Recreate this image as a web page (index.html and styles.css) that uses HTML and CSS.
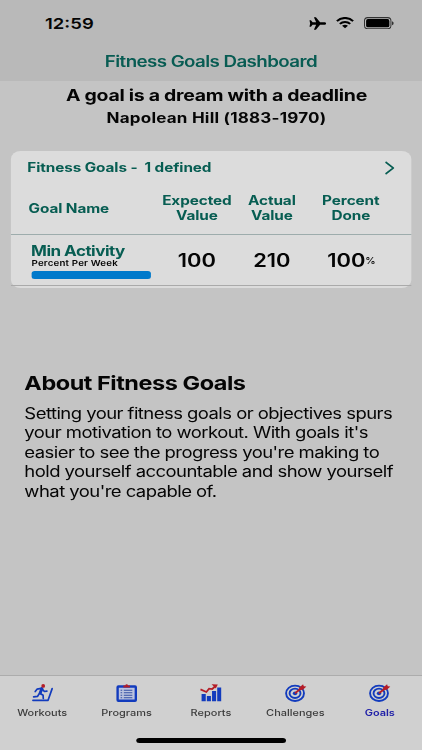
FILE: index.html
```html
<!DOCTYPE html>
<html lang="en">
<head>
<meta charset="utf-8">
<title>Fitness Goals Dashboard</title>
<link rel="stylesheet" href="styles.css">
</head>
<body>
<div class="screen">
  <header class="top">
    <div class="status">
      <span class="time">12:59</span>
      <div class="indicators">
        <svg class="plane" viewBox="0 0 17 13" preserveAspectRatio="none"><path d="M16.8 6.5c0 .8-1 1.3-2.2 1.3h-3.8L6.7 12.7H4.7L6.9 7.8H3.4L1.8 9.8H.3l.7-3.3-.7-3.3h1.5l1.6 2h3.5L4.7.3h2l4.1 4.9h3.8c1.2 0 2.2.5 2.2 1.3z"/></svg>
        <svg class="wifi" viewBox="0 0 18 12" preserveAspectRatio="none"><path d="M1 4.3C5.4-.1 12.6-.1 17 4.3M3.9 7.2c2.8-2.8 7.4-2.8 10.2 0" fill="none" stroke="#000" stroke-width="2.1"/><path d="M6.1 9.1c1.7-1.5 4.1-1.5 5.8 0L9 11.8z"/></svg>
        <svg class="battery" viewBox="0 0 30 12" preserveAspectRatio="none"><rect x=".6" y=".6" width="26.3" height="10.8" rx="3.2" fill="none" stroke="#333" stroke-width="1"/><rect x="2.2" y="2" width="23.1" height="8" rx="1.8"/><path d="M28.1 4v4c1.9-.7 1.9-3.3 0-4z" fill="#222"/></svg>
      </div>
    </div>
    <h1 class="title">Fitness Goals Dashboard</h1>
  </header>
  <main class="content">
    <div class="quote">A goal is a dream with a deadline</div>
    <div class="author">Napolean Hill (1883-1970)</div>
    <section class="card">
      <div class="card-head">
        <span class="card-title">Fitness Goals -&nbsp; 1 defined</span>
        <svg class="chevron" viewBox="0 0 10 14" preserveAspectRatio="none"><path d="M1 1l8 6-8 6" fill="none" stroke="#075d52" stroke-width="1.6"/></svg>
      </div>
      <div class="grid columns">
        <span class="name">Goal Name</span>
        <span>Expected<br>Value</span>
        <span>Actual<br>Value</span>
        <span>Percent<br>Done</span>
      </div>
      <div class="grid goal">
        <div class="activity">
          <div class="activity-name">Min Activity</div>
          <div class="unit">Percent Per Week</div>
          <div class="bar"></div>
        </div>
        <span>100</span>
        <span>210</span>
        <span class="percent">100<small>%</small></span>
      </div>
    </section>
    <section class="about">
      <h2>About Fitness Goals</h2>
      <p>Setting your fitness goals or objectives spurs<br>your motivation to workout. With goals it's<br>easier to see the progress you're making to<br>hold yourself accountable and show yourself<br>what you're capable of.</p>
    </section>
  </main>
  <nav class="tabs">
    <a class="tab"><svg viewBox="0 0 22 18" preserveAspectRatio="none"><g fill="none" stroke="#123bbd" stroke-linecap="round" stroke-linejoin="round"><path d="M1.3 16.3h15.2L20.6 4.6" stroke-width="1.7"/><path d="M10.3 4.6L8.6 9" stroke-width="3"/><path d="M9.7 4.4L5.4 5.2 3.6 7.5M10.6 5l2.2 2.5 2.5-.3M8.3 9.3l3.2 2 .2 3.2M7.8 9.4L6 12.3l-4 .6" stroke-width="1.7"/></g><circle cx="11.6" cy="1.9" r="1.9" fill="#b51d27"/></svg><span>Workouts</span></a>
    <a class="tab"><svg viewBox="0 0 22 18" preserveAspectRatio="none"><rect x="2" y="2.5" width="18.3" height="14.2" rx=".8" fill="#bbc3df" stroke="#123bbd" stroke-width="2.4"/><path d="M7.8 3.4V1.5H9.8a1.3 1.3 0 0 1 2.6 0h2v1.9z" fill="#b51d27"/><path d="M8.2 6.2h8.6M8.2 8.7h8.6M8.2 11.2h8.6M8.2 13.7h8.6M5 6.2h1.6M5 8.7h1.6M5 11.2h1.6M5 13.7h1.6" stroke="#3450a5" stroke-width="1.1"/></svg><span>Programs</span></a>
    <a class="tab"><svg viewBox="0 0 22 18" preserveAspectRatio="none"><path d="M2 10h4.2v7.3H2zM7.3 12h4.1v5.3H7.3zM12.5 7.1h4.1v10.2h-4.1zM17.7 3.5h4.2v13.8h-4.2z" fill="#123bbd"/><path d="M.9 5.4L6.8 8l2.7-3.3 3.2.3L16 2" fill="none" stroke="#b51d27" stroke-width="1.7"/><path d="M12 .2l6.3.2-2 4.2z" fill="#b51d27"/></svg><span>Reports</span></a>
    <a class="tab"><svg viewBox="0 0 22 18" preserveAspectRatio="none"><g fill="none" stroke="#123bbd" stroke-width="1.9"><ellipse cx="10.3" cy="9.3" rx="9" ry="7.7"/><ellipse cx="10.3" cy="9.3" rx="5.5" ry="4.7"/></g><ellipse cx="10.3" cy="9.3" rx="2.2" ry="1.9" fill="#123bbd"/><path d="M10.3 9.3l7.5-6" stroke="#b51d27" stroke-width="1.8"/><path d="M14.3 3.8L18.4.3l.7 1.9 2.6.4-3.5 3.1-3.4.2z" fill="#b51d27"/></svg><span>Challenges</span></a>
    <a class="tab active"><svg viewBox="0 0 22 18" preserveAspectRatio="none"><g fill="none" stroke="#123bbd" stroke-width="1.9"><ellipse cx="10.3" cy="9.3" rx="9" ry="7.7"/><ellipse cx="10.3" cy="9.3" rx="5.5" ry="4.7"/></g><ellipse cx="10.3" cy="9.3" rx="2.2" ry="1.9" fill="#123bbd"/><path d="M10.3 9.3l7.5-6" stroke="#b51d27" stroke-width="1.8"/><path d="M14.3 3.8L18.4.3l.7 1.9 2.6.4-3.5 3.1-3.4.2z" fill="#b51d27"/></svg><span>Goals</span></a>
  </nav>
  <div class="home"><i></i></div>
</div>
</body>
</html>
```

FILE: styles.css
```css
* { box-sizing: border-box; }
html, body { margin: 0; width: 422px; height: 750px; overflow: hidden; background: #c4c4c4; }
/* The whole screen uses a wide aspect, so type and icons widen together. */
.screen {
  width: 346.75px; height: 750px;
  transform: scaleX(1.217); transform-origin: 0 0;
  display: flex; flex-direction: column;
  font-family: Inter, "Liberation Sans", sans-serif;
  color: #050505;
}
.top { height: 81px; flex: none; background: #b9b9b9; }
.status { height: 46px; display: flex; justify-content: space-between; padding: 0 23.2px 0 37px; align-items: center; }
.time { font-size: 15.2px; font-weight: 600; }
.indicators { display: flex; align-items: center; }
.indicators svg { display: block; }
.plane { width: 14.2px; height: 13px; margin-right: 8px; }
.wifi { width: 15px; height: 11.5px; margin-right: 7.6px; }
.battery { width: 24.8px; height: 12.4px; }
.title { margin: 5px 0 0; font-size: 15.4px; line-height: 21px; font-weight: 600; letter-spacing: -.47px; text-align: center; color: #085c53; }
.content { flex: 1; display: flex; flex-direction: column; }
.quote { height: 28px; line-height: 28px; font-size: 16px; font-weight: 700; letter-spacing: -.23px; text-align: center; padding-left: 9px; }
.author { height: 18px; line-height: 18px; font-size: 14px; font-weight: 700; letter-spacing: .17px; text-align: center; padding-left: 9px; }
.card { height: 137px; margin: 24px 9px 0; border-radius: 8px; background: #dcdcdc; }
.card-head { height: 33px; padding: 0 14px 0 13.4px; display: flex; align-items: center; justify-content: space-between; color: #075d52; }
.card-title { font-size: 12.6px; font-weight: 700; letter-spacing: -.08px; }
.chevron { width: 8px; height: 14px; }
.grid { display: grid; grid-template-columns: 121.6px 62.4px 60.8px 69px; align-items: center; text-align: center; }
.columns { height: 51px; padding-bottom: 2px; font-size: 12.6px; line-height: 15px; font-weight: 700; letter-spacing: -.08px; color: #075d52; border-bottom: 1px solid #9dacac; }
.name { text-align: left; padding-left: 14.5px; }
.goal { height: 51px; border-bottom: 1px solid #aaa; font-size: 18px; font-weight: 600; }
.percent { padding-left: 1px; }
.goal small { font-size: 8.6px; font-weight: 500; position: relative; top: -3px; }
.activity { text-align: left; padding-left: 16.5px; align-self: start; }
.activity-name { height: 17px; margin-top: 7px; line-height: 17px; font-size: 14px; font-weight: 700; letter-spacing: -.43px; color: #075d52; }
.unit { height: 9px; line-height: 9px; padding-left: .4px; font-size: 8px; font-weight: 600; letter-spacing: .14px; }
.bar { width: 98px; height: 8px; margin: 3px 0 0 .7px; border-radius: 2.5px; background: #0079cb; }
.about { margin: 82px 0 0 20px; }
h2 { margin: 0; font-size: 19.3px; line-height: 27px; font-weight: 700; letter-spacing: -.38px; }
p { margin: 6.6px 0 0; font-size: 15.2px; line-height: 19.55px; letter-spacing: -.45px; white-space: nowrap; }
.tabs { height: 54px; flex: none; display: grid; grid-template-columns: repeat(5, 1fr); background: #d0d0d0; border-top: 1.5px solid #acacac; }
.tab { display: flex; flex-direction: column; align-items: center; padding-top: 8px; font-size: 9px; line-height: 12px; font-weight: 500; color: #3c3c3c; }
.tab svg { width: 18px; height: 18px; margin-bottom: 5px; }
.active { color: #2020a8; font-weight: 600; }
.home { height: 21px; flex: none; background: #d0d0d0; display: flex; justify-content: center; padding-top: 9px; }
.home i { width: 123.5px; height: 4.5px; border-radius: 3px; background: #000; }
```
